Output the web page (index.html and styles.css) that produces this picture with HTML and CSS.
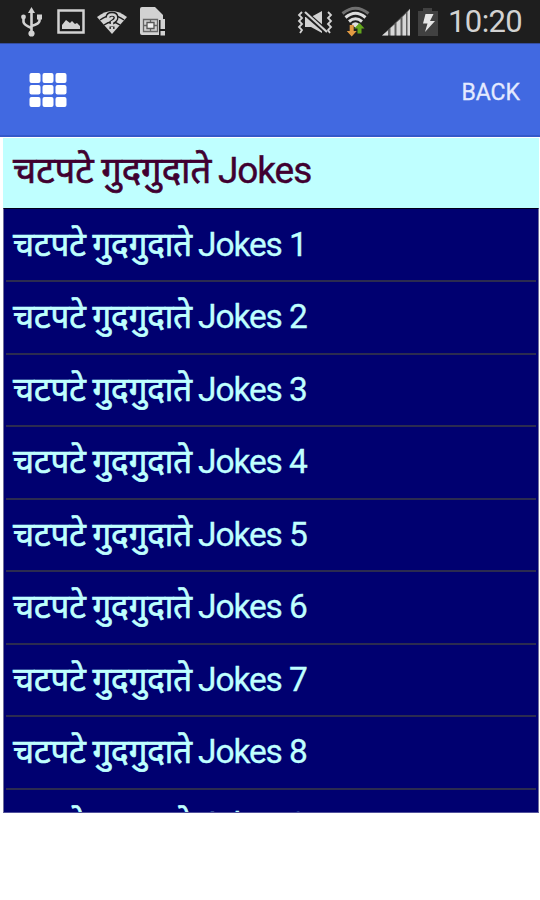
FILE: index.html
```html
<!DOCTYPE html>
<html lang="hi">
<head>
  <meta charset="UTF-8" />
  <meta name="viewport" content="width=device-width, initial-scale=1.0" />
  <title>चटपटे गुदगुदाते Jokes</title>
  <link rel="stylesheet" href="styles.css">
</head>
<body>
  <div class="status-bar">
    <svg class="status-icons" width="180" height="43" viewBox="0 0 180 43">
      <!-- usb -->
      <g fill="none" stroke="#d2d2d2" stroke-width="2.6">
        <path d="M31.5 11V33M23.5 18V22Q24 25 31.5 28M39.5 18V21Q39 24 31.5 26" />
      </g>
      <g fill="#d2d2d2">
        <path d="M31.5 7l3.5 6h-7z" />
        <circle cx="23.5" cy="17" r="2.4" />
        <path d="M37 14.5h5v5h-5z" />
        <circle cx="31.5" cy="33.5" r="3.1" />
      </g>
      <!-- picture -->
      <rect x="58.5" y="10.5" width="25" height="22" fill="none" stroke="#d2d2d2" stroke-width="2.5" />
      <path d="M62 29V25l4-5 4 3 2-2 3 3 2-1 3 3v3z" fill="#d2d2d2" />
      <!-- unknown wifi -->
      <path d="M97 17Q112 5 127 17L112 34z" fill="#d2d2d2" />
      <path d="M100 20Q112 11 124 20M104 25Q112 19 120 25" fill="none" stroke="#1e1e1e" stroke-width="1.5" />
      <path d="M108 17.5Q108 14 112 14T116 17.5Q116 20 112 22.5V24M112 26.5V29" fill="none" stroke="#1e1e1e" stroke-width="5" />
      <path d="M108 18Q108 14.5 112 14.5T116 18Q116 20 112 22V24.5M112 27V29.5" fill="none" stroke="#d2d2d2" stroke-width="2.3" />
      <!-- sim card -->
      <path d="M140 9q0-2 2-2h13l8 8v5h-4v15h-17q-2 0-2-2z" fill="#d2d2d2" />
      <path d="M143.5 19.5h14v12h-14zM143.5 25.5H147M154 25.5h3.5M150.5 19.5v3M150.5 28.5v3" fill="none" stroke="#666" stroke-width="1.3" />
      <path d="M147 22.5h7v6h-7z" fill="#f0f0f0" stroke="#555" stroke-width="1.3" />
      <path d="M160.5 19h4.5v10h-4.500zM160.500 31h4.5v4.500h-4.500z" fill="#d2d2d2" />
    </svg>
    <svg class="status-icons" width="150" height="43" viewBox="290 0 150 43">
      <!-- vibrate, muted -->
      <path d="M305 17h6l11-6v22l-11-6h-6z" fill="#d2d2d2" />
      <path d="M304 12L328 33" stroke="#1e1e1e" stroke-width="5" />
      <path d="M305 12L327 32" stroke="#d2d2d2" stroke-width="2.2" />
      <path d="M302 12l-3 3 3 3-3 3 3 3-3 3 3 3-2 3M328 12l3 3-3 3 3 3-3 3 3 3-3 3 2 3" fill="none" stroke="#d2d2d2" stroke-width="1.8" />
      <!-- wifi -->
      <g fill="none" stroke-width="3">
        <path d="M342.5 13.5Q355.5 3 368.5 13.5" stroke="#707070" />
        <path d="M345.5 17.5Q355.5 9 365.5 17.5M349 21.5Q355.5 16 362 21.5" stroke="#dedede" />
      </g>
      <path d="M351.5 24Q355.5 20.5 359.5 24L355.5 28z" fill="#dedede" />
      <path d="M349.7 25h4v6h3l-5 5.5-5-5.5h3z" fill="#e29a42" />
      <path d="M357.5 33.5v-5h-3.2l5.2-5.5 5 5.5h-3v5z" fill="#63a51c" />
      <!-- signal -->
      <path d="M382 35.5l6-5v5zM390.5 28l4-3.5v11h-4zM396.5 22.5l4-3.5v16.5h-4zM402.5 17l3.5-3.5v22h-3.5zM407.5 12l2.5-3v26.5h-2.5z" fill="#d8d8d8" />
      <path d="M382 35.5L410 8.5V35.5z" fill="#d8d8d8" opacity="0.35" />
      <!-- battery -->
      <path d="M418 11h5V8h9v3h6v25h-20z" fill="#414141" />
      <path d="M425.5 14h8l-3.5 7h5l-10 11 2.5-8.5h-4.5z" fill="#e6e6e6" />
    </svg>
    <span class="clock">10:20</span>
  </div>

  <div class="action-bar">
    <svg class="grid-icon" width="38" height="35" viewBox="0 0 38 35" fill="#fff">
      <rect x="0.5" width="11" height="10" rx="2" />
      <rect x="13.5" width="11" height="10" rx="2" />
      <rect x="26.5" width="11" height="10" rx="2" />
      <rect x="0.5" y="12" width="11" height="9.5" rx="2" />
      <rect x="13.5" y="12" width="11" height="9.5" rx="2" />
      <rect x="26.5" y="12" width="11" height="9.5" rx="2" />
      <rect x="0.5" y="24" width="11" height="10" rx="2" />
      <rect x="13.5" y="24" width="11" height="10" rx="2" />
      <rect x="26.5" y="24" width="11" height="10" rx="2" />
    </svg>
    <span class="back">BACK</span>
  </div>

  <div class="panel">
    <div class="title"><span class="hindi">चटपटे गुदगुदाते</span><span class="latin">Jokes</span></div>
    <div class="list">
      <div class="item"><span class="hindi">चटपटे गुदगुदाते</span><span class="latin">Jokes 1</span></div>
      <div class="item"><span class="hindi">चटपटे गुदगुदाते</span><span class="latin">Jokes 2</span></div>
      <div class="item"><span class="hindi">चटपटे गुदगुदाते</span><span class="latin">Jokes 3</span></div>
      <div class="item"><span class="hindi">चटपटे गुदगुदाते</span><span class="latin">Jokes 4</span></div>
      <div class="item"><span class="hindi">चटपटे गुदगुदाते</span><span class="latin">Jokes 5</span></div>
      <div class="item"><span class="hindi">चटपटे गुदगुदाते</span><span class="latin">Jokes 6</span></div>
      <div class="item"><span class="hindi">चटपटे गुदगुदाते</span><span class="latin">Jokes 7</span></div>
      <div class="item"><span class="hindi">चटपटे गुदगुदाते</span><span class="latin">Jokes 8</span></div>
      <div class="item"><span class="hindi">चटपटे गुदगुदाते</span><span class="latin">Jokes 9</span></div>
    </div>
  </div>
</body>
</html>
```
FILE: styles.css
```css
* {
  box-sizing: border-box;
}

body {
  margin: 0;
  height: 900px;
  overflow: hidden;
  background-color: #fff;
  font-family: Roboto, sans-serif;
}

.status-bar {
  display: flex;
  height: 43px;
  background-color: #1e1e1e;
}

.status-icons:nth-child(2) {
  margin-left: 110px;
}

.clock {
  margin-left: 8px;
  color: #d2d2d2;
  font-size: 31px;
  line-height: 43px;
  letter-spacing: -0.6px;
  white-space: nowrap;
}

.action-bar {
  display: flex;
  align-items: center;
  justify-content: space-between;
  height: 94px;
  padding: 2px 20px 0 29px;
  background-color: #4169e1;
  border-top: 1px solid #344da0;
  border-bottom: 2px solid #3459ca;
}

.back {
  padding-top: 3px;
  color: #e4eaff;
  font-size: 23px;
  -webkit-text-stroke: 0.3px;
}

.panel {
  width: 536px;
  height: 675px;
  margin: 1px 0 0 3px;
  overflow: hidden;
}

.title {
  display: flex;
  align-items: baseline;
  height: 70px;
  padding-left: 10px;
  background-color: #bfffff;
  color: #400030;
  font-size: 37px;
  line-height: 62px;
  white-space: nowrap;
  -webkit-text-stroke: 0.4px;
}

.title .hindi {
  width: 205px;
  font-size: 36.5px;
  word-spacing: -2px;
}

.title .latin {
  letter-spacing: -1.1px;
}

.list {
  height: 605px;
  padding-top: 0.5px;
  overflow: hidden;
  background-color: #000070;
  border: 1px solid #70709c;
  border-top: 1px solid #000018;
  border-bottom-color: #50509c;
}

.item {
  display: flex;
  align-items: baseline;
  height: 72.5px;
  margin: 0 2px;
  padding-left: 7px;
  border-bottom: 2px solid #2b2b50;
  color: #bfffff;
  font-size: 33.5px;
  line-height: 68px;
  white-space: nowrap;
  -webkit-text-stroke: 0.3px;
}

.item .hindi {
  width: 185px;
  font-size: 33px;
  word-spacing: -2px;
}

.item .latin {
  letter-spacing: -1.1px;
}

.hindi {
  flex: none;
  font-family: "Noto Sans", sans-serif;
  -webkit-text-stroke: 0.7px;
}
```
